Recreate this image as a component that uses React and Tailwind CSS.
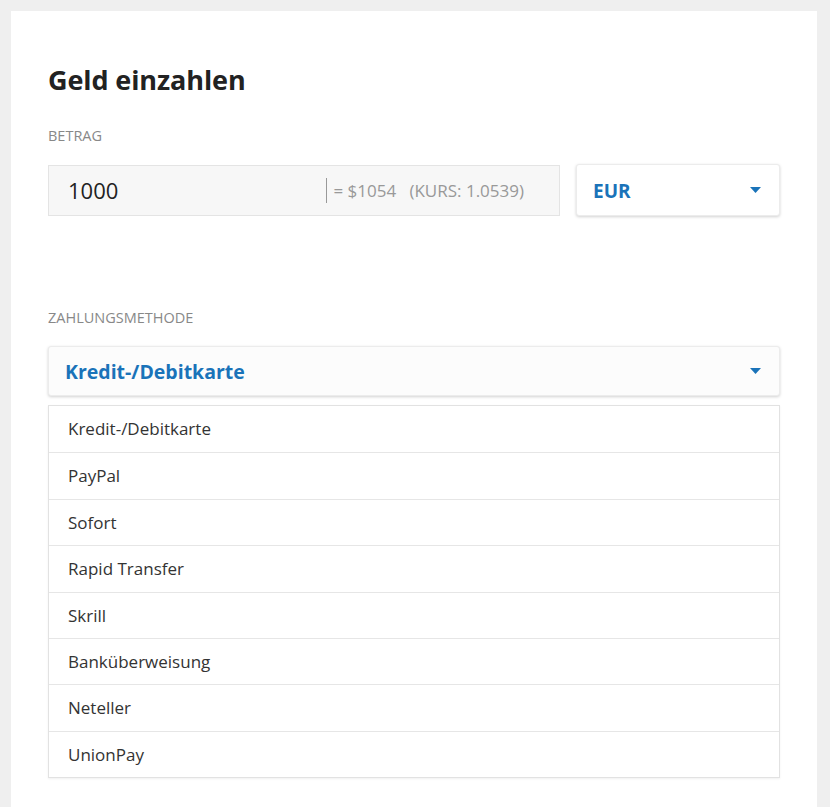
import React from "react";

const methods = [
  "Kredit-/Debitkarte",
  "PayPal",
  "Sofort",
  "Rapid Transfer",
  "Skrill",
  "Banküberweisung",
  "Neteller",
  "UnionPay",
];

function Caret() {
  return (
    <svg width="11" height="6" viewBox="0 0 11 6" className="shrink-0">
      <path d="M0 0h11L5.5 6z" fill="#1a73b9" />
    </svg>
  );
}

export default function App() {
  return (
    <div
      className="min-h-[807px] bg-[#efefef] pt-[11px] pl-[11px] pr-[13px]"
      style={{ fontFamily: '"Open Sans", "Liberation Sans", sans-serif' }}
    >
      <div className="bg-white min-h-[796px] px-[37px] pt-[52px]">
        <h1 className="text-[27px] leading-[34px] font-bold text-[#222] tracking-[-0.1px]">Geld einzahlen</h1>

        <div className="mt-[29px] text-[14.5px] leading-[19px] uppercase text-[#888]">Betrag</div>

        <div className="mt-[20px] flex gap-4 items-start">
          <div className="flex-1 h-[51px] bg-[#f7f7f7] border border-[#e4e4e4] flex items-center pl-[19px] pr-[35px]">
            <span className="text-[22px] text-[#222] flex-1">1000</span>
            <span className="w-px h-[25px] bg-[#999] mr-[6px]" />
            <span className="text-[17px] text-[#999] whitespace-pre">= $1054   (KURS: 1.0539)</span>
          </div>
          <div className="w-[204px] h-[52px] -mt-px bg-white rounded-[3px] border border-[#ececec] shadow-[0_1px_3px_rgba(0,0,0,0.18)] flex items-center justify-between pl-4 pr-[18px]">
            <span className="text-[19px] font-bold text-[#1a73b9] mt-[3px]">EUR</span>
            <Caret />
          </div>
        </div>

        <div className="mt-[92px] text-[14.5px] leading-[19px] uppercase text-[#888]">Zahlungsmethode</div>

        <div className="mt-[19px] h-[50px] bg-[#fcfcfc] rounded-[3px] border border-[#ececec] shadow-[0_1px_3px_rgba(0,0,0,0.18)] flex items-center justify-between pl-4 pr-[18px]">
          <span className="text-[19.5px] font-bold text-[#1a73b9] mt-[2px]">Kredit-/Debitkarte</span>
          <Caret />
        </div>

        <div className="mt-[9px] border border-[#e2e2e2] shadow-[0_1px_2px_rgba(0,0,0,0.06)]">
          {methods.map((m, i) => (
            <div
              key={m}
              className={`h-[46.4px] flex items-center pl-[19px] text-[17px] text-[#333] ${i > 0 ? "border-t border-[#e6e6e6]" : ""}`}
            >
              {m}
            </div>
          ))}
        </div>
      </div>
    </div>
  );
}
